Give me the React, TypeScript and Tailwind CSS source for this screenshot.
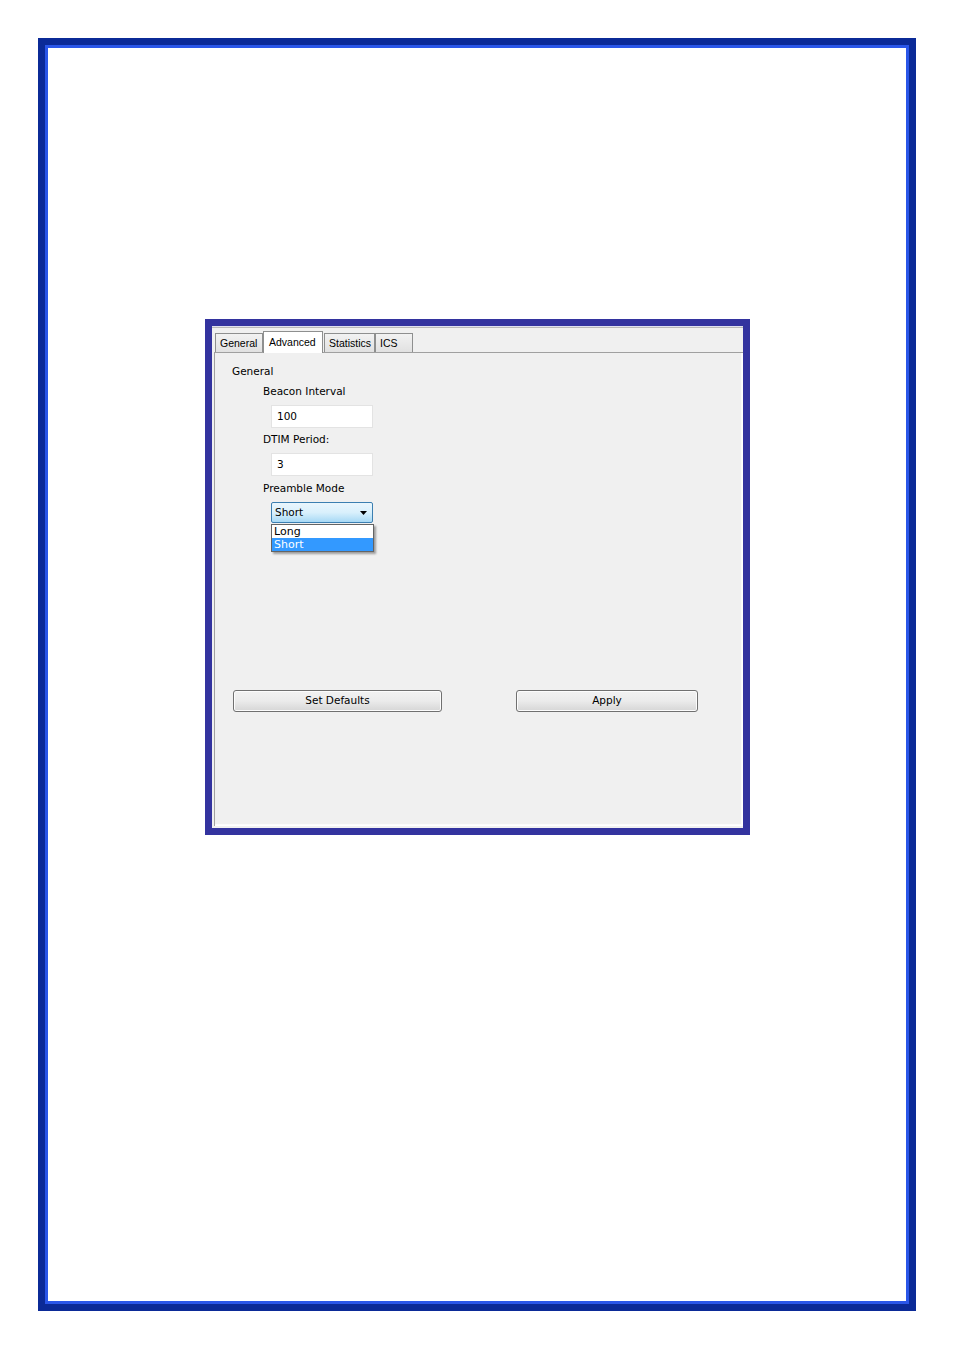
import React from "react";

const ui = "font-['DejaVu_Sans',sans-serif] text-[10.5px] text-black";

function Tab({ label, w, active }: { label: string; w: string; active?: boolean }) {
  if (active) {
    return (
      <div
        className={`${w} h-[22px] -mb-px relative z-10 flex items-start pl-[5px] pt-[3px] border border-b-0 border-[#8e8f8f] bg-white font-['Liberation_Sans',sans-serif] text-[10.5px]`}
      >
        {label}
      </div>
    );
  }
  return (
    <div
      className={`${w} h-[19px] flex items-center pl-[4px] pt-[2px] border border-b-0 border-[#8e8f8f] bg-gradient-to-b from-[#f2f2f2] to-[#e1e1e1] font-['Liberation_Sans',sans-serif] text-[10.5px]`}
    >
      {label}
    </div>
  );
}

function TextBox({ value }: { value: string }) {
  return (
    <div className="ml-[56px] w-[102px] h-[23px] bg-white border border-[#e3e3e3] flex items-center pl-[5px]">
      {value}
    </div>
  );
}

function PushButton({ label, w }: { label: string; w: string }) {
  return (
    <div
      className={`${w} h-[22px] rounded-[3px] border border-[#707070] bg-gradient-to-b from-[#f2f2f2] via-[#ebebeb] to-[#d6d6d6] flex items-center justify-center shadow-[inset_0_0_0_1px_#fcfcfc]`}
    >
      {label}
    </div>
  );
}

export default function App() {
  return (
    <div className="w-[954px] h-[1350px] bg-white pt-[38px] pl-[38px]">
      <div className="w-[878px] h-[1273px] border-[7px] border-[#0b2a97]">
        <div className="w-full h-full border-[3px] border-[#2a56e8] bg-white pt-[271px] pl-[157px]">
          <div className={`${ui} w-[545px] h-[516px] border-[7px] border-[#33339f] bg-[#f0f0f0] flex flex-col`}>
            <div className="h-px bg-[#dfe1ef]" />
            <div className="h-px bg-[#b9b9b9]" />
            <div className="flex items-end h-[24px] pl-[3px]">
              <Tab label="General" w="w-[48px]" />
              <Tab label="Advanced" w="w-[60px]" active />
              <div className="w-px" />
              <Tab label="Statistics" w="w-[51px]" />
              <Tab label="ICS" w="w-[38px]" />
            </div>
            <div className="flex-1 ml-[2px] mb-[2px] border-t border-l border-[#a0a0a0] flex">
              <div className="flex-1 border-r border-b border-white flex flex-col">
                <div className="flex-1 border-r border-b border-[#fbfbfb] pl-[17px] flex flex-col">
                  <div className="mt-[11px] h-[16px] flex items-center">General</div>
                  <div className="mt-[4px] h-[16px] flex items-center pl-[31px]">Beacon Interval</div>
                  <div className="mt-[5px] -ml-[17px]">
                    <TextBox value="100" />
                  </div>
                  <div className="mt-[4px] h-[16px] flex items-center pl-[31px]">DTIM Period:</div>
                  <div className="mt-[5px] -ml-[17px]">
                    <TextBox value="3" />
                  </div>
                  <div className="mt-[5px] h-[16px] flex items-center pl-[31px]">Preamble Mode</div>
                  <div className="mt-[5px] ml-[39px] relative w-[102px]">
                    <div className="h-[21px] border border-[#3c7fb1] rounded-[2px] bg-gradient-to-b from-[#eaf6fd] via-[#d9f0fc] to-[#a7d9f5] flex items-center pl-[3px] pr-[5px] justify-between">
                      <span>Short</span>
                      <svg width="7" height="4" viewBox="0 0 7 4">
                        <path d="M0 0h7L3.5 4z" fill="#000" />
                      </svg>
                    </div>
                    <div className="absolute left-0 top-[22px] w-[103px] bg-white border border-[#646464] shadow-[2px_2px_2px_rgba(0,0,0,0.35)] z-20">
                      <div className="h-[13px] leading-[13px] pl-[2px] text-[11px]">Long</div>
                      <div className="h-[13px] leading-[13px] pl-[2px] text-[11px] bg-[#3399ff] text-white">Short</div>
                    </div>
                  </div>
                  <div className="mt-[167px] ml-px flex">
                    <PushButton label="Set Defaults" w="w-[209px]" />
                    <div className="w-[74px]" />
                    <PushButton label="Apply" w="w-[182px]" />
                  </div>
                </div>
              </div>
            </div>
          </div>
        </div>
      </div>
    </div>
  );
}
